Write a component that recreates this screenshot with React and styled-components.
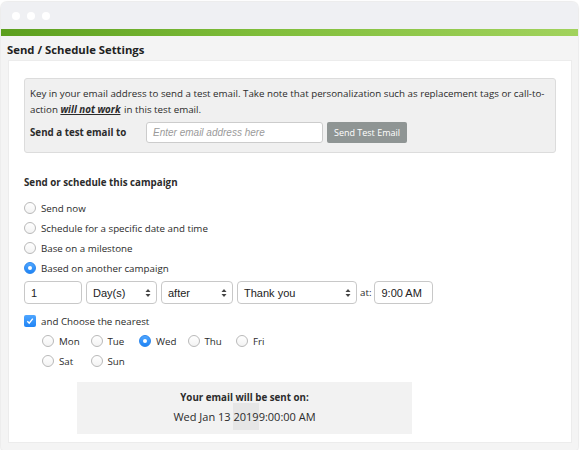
import React from "react";
import styled, { createGlobalStyle } from "styled-components";

const Global = createGlobalStyle`
  html, body { margin: 0; padding: 0; background: #ffffff; }
  body { font-family: "Open Sans", "Liberation Sans", sans-serif; color: #2b2b2b; }
  * { box-sizing: border-box; }
`;

const Window = styled.div`
  margin: 2px 5px 0 1px;
  width: 577px;
  height: 448px;
  border-radius: 6px 6px 3px 3px;
  background: #f4f4f4;
  box-shadow: 0 0 1px 1px rgba(0, 0, 0, 0.08);
  display: flex;
  flex-direction: column;
  overflow: hidden;
`;

const TitleBar = styled.div`
  height: 29px;
  background: #eff0f3;
  display: flex;
  align-items: center;
  gap: 7px;
  padding-left: 11px;
`;

const Dot = styled.span`
  width: 8px;
  height: 8px;
  border-radius: 50%;
  background: #ffffff;
`;

const GreenBar = styled.div`
  height: 7px;
  background: linear-gradient(90deg, #5c9f1e 0%, #7fbd3a 45%, #a1d25c 100%);
`;

const Header = styled.div`
  height: 26px;
  display: flex;
  align-items: center;
  padding: 3px 0 0 6px;
  font-size: 11.3px;
  font-weight: 700;
  color: #222;
`;

const Content = styled.div`
  flex: 1;
  margin: 0 6px 7px 7px;
  background: #fff;
  border: 1px solid #ececec;
  padding: 17px 15px 8px 15px;
  display: flex;
  flex-direction: column;
`;

const TestBox = styled.div`
  background: #f0f0f0;
  border: 1px solid #dcdcdc;
  border-radius: 3px;
  padding: 7px 5px 9px 5px;
  font-size: 9.75px;
  line-height: 16px;
`;

const Note = styled.p`
  margin: 0;
  em {
    font-weight: 700;
    text-decoration: underline;
    margin-right: 1px;
  }
`;

const TestRow = styled.div`
  display: flex;
  align-items: center;
  margin-top: 4px;
`;

const TestLabel = styled.span`
  width: 116px;
  font-weight: 700;
`;

const EmailInput = styled.div`
  width: 177px;
  height: 21px;
  border: 1px solid #ccc;
  border-radius: 3px;
  background: #fff;
  display: flex;
  align-items: center;
  padding-left: 6px;
  font-family: "Liberation Sans", Arial, sans-serif;
  font-style: italic;
  font-size: 10px;
  color: #9a9a9a;
`;

const GreyButton = styled.div`
  margin-left: 4px;
  width: 80px;
  height: 21px;
  border-radius: 2px;
  background: #8f9594;
  color: #fff;
  font-size: 9px;
  display: flex;
  align-items: center;
  justify-content: center;
`;

const SectionTitle = styled.div`
  margin-top: 22px;
  font-size: 9.75px;
  line-height: 16px;
  font-weight: 700;
`;

const RadioList = styled.div`
  margin-top: 7px;
  display: flex;
  flex-direction: column;
`;

const OptionRow = styled.div`
  height: 20px;
  display: flex;
  align-items: center;
  gap: 5px;
  font-size: 9.75px;
`;

const RadioCircle = styled.span`
  width: 12px;
  height: 12px;
  border-radius: 50%;
  flex: none;
  display: flex;
  align-items: center;
  justify-content: center;
  background: ${(p) => (p.$on ? "linear-gradient(#4fa6ff, #1f84f5)" : "linear-gradient(#ffffff, #f3f3f3)")};
  border: 1px solid ${(p) => (p.$on ? "#2a86ee" : "#b9b9b9")};
  &::after {
    content: "";
    display: ${(p) => (p.$on ? "block" : "none")};
    width: 4px;
    height: 4px;
    border-radius: 50%;
    background: #fff;
  }
`;

const FieldRow = styled.div`
  margin-top: 3px;
  display: flex;
  align-items: center;
  gap: 4px;
`;

const Field = styled.div`
  width: ${(p) => p.$w}px;
  height: 23px;
  border: 1px solid #c8c8c8;
  border-radius: 4px;
  background: #fff;
  display: flex;
  align-items: center;
  justify-content: space-between;
  padding: 0 5px 0 6px;
  font-family: "Liberation Sans", Arial, sans-serif;
  font-size: 11px;
  color: #222;
`;

const AtLabel = styled.span`
  font-size: 9.75px;
  margin: 0 -1px 0 -1px;
`;

const CheckRow = styled(OptionRow)`
  margin-top: 7px;
`;

const CheckBox = styled.span`
  width: 12px;
  height: 12px;
  border-radius: 2px;
  background: linear-gradient(#4fa6ff, #1f84f5);
  display: flex;
  align-items: center;
  justify-content: center;
  flex: none;
`;

const DayGrid = styled.div`
  padding-left: 18px;
  display: grid;
  grid-template-columns: repeat(5, 48.5px);
`;

const SummaryBox = styled.div`
  margin: 11px 0 0 53px;
  width: 335px;
  height: 52px;
  background: #f2f2f2;
  display: flex;
  flex-direction: column;
  align-items: center;
  padding-top: 8px;
  line-height: 16px;
`;

const SummaryTitle = styled.div`
  font-weight: 700;
  font-size: 9.75px;
`;

const SummaryDate = styled.div`
  margin-top: 3px;
  font-size: 11px;
`;

const YearMark = styled.span`
  background: #e6e6e6;
  padding: 6px 0 6px 0;
`;

const Arrows = () => (
  <svg width="6" height="10" viewBox="0 0 6 10">
    <path d="M0.5 4 L3 1 L5.5 4 Z" fill="#444" />
    <path d="M0.5 6 L3 9 L5.5 6 Z" fill="#444" />
  </svg>
);

const Radio = ({ on, children }) => (
  <OptionRow>
    <RadioCircle $on={on} />
    <span>{children}</span>
  </OptionRow>
);

export default function App() {
  const days = ["Mon", "Tue", "Wed", "Thu", "Fri", "Sat", "Sun"];
  return (
    <>
      <Global />
      <Window>
        <TitleBar>
          <Dot />
          <Dot />
          <Dot />
        </TitleBar>
        <GreenBar />
        <Header>Send / Schedule Settings</Header>
        <Content>
          <TestBox>
            <Note>
              <span>Key in your email address to send a test email. Take note that personalization such as replacement tags or call-to-</span>
              <span>action </span>
              <em>will not work</em>
              <span> in this test email.</span>
            </Note>
            <TestRow>
              <TestLabel>Send a test email to</TestLabel>
              <EmailInput>Enter email address here</EmailInput>
              <GreyButton>Send Test Email</GreyButton>
            </TestRow>
          </TestBox>
          <SectionTitle>Send or schedule this campaign</SectionTitle>
          <RadioList>
            <Radio>Send now</Radio>
            <Radio>Schedule for a specific date and time</Radio>
            <Radio>Base on a milestone</Radio>
            <Radio on>Based on another campaign</Radio>
          </RadioList>
          <FieldRow>
            <Field $w={58}>1</Field>
            <Field $w={71}>
              Day(s)
              <Arrows />
            </Field>
            <Field $w={72}>
              after
              <Arrows />
            </Field>
            <Field $w={120}>
              Thank you
              <Arrows />
            </Field>
            <AtLabel>at:</AtLabel>
            <Field $w={59}>9:00 AM</Field>
          </FieldRow>
          <CheckRow>
            <CheckBox>
              <svg width="8" height="8" viewBox="0 0 8 8">
                <path d="M1.3 4.2 L3.2 6.1 L6.8 1.6" fill="none" stroke="#fff" strokeWidth="1.4" />
              </svg>
            </CheckBox>
            <span>and Choose the nearest</span>
          </CheckRow>
          <DayGrid>
            {days.map((d) => (
              <Radio key={d} on={d === "Wed"}>
                {d}
              </Radio>
            ))}
          </DayGrid>
          <SummaryBox>
            <SummaryTitle>Your email will be sent on:</SummaryTitle>
            <SummaryDate>
              Wed Jan 13 <YearMark>2019</YearMark>9:00:00 AM
            </SummaryDate>
          </SummaryBox>
        </Content>
      </Window>
    </>
  );
}
